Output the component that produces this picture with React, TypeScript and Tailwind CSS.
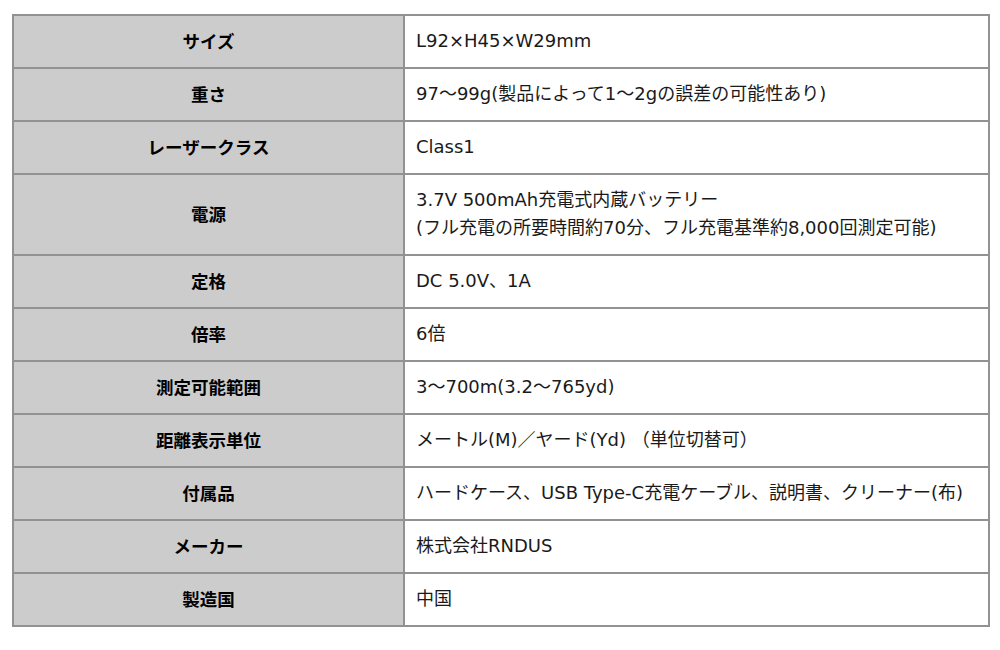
import React from "react";

const rows: { label: string; value: string[] }[] = [
  { label: "サイズ", value: ["L92×H45×W29mm"] },
  { label: "重さ", value: ["97～99g(製品によって1～2gの誤差の可能性あり)"] },
  { label: "レーザークラス", value: ["Class1"] },
  {
    label: "電源",
    value: [
      "3.7V 500mAh充電式内蔵バッテリー",
      "(フル充電の所要時間約70分、フル充電基準約8,000回測定可能)",
    ],
  },
  { label: "定格", value: ["DC 5.0V、1A"] },
  { label: "倍率", value: ["6倍"] },
  { label: "測定可能範囲", value: ["3～700m(3.2～765yd)"] },
  { label: "距離表示単位", value: ["メートル(M)／ヤード(Yd) （単位切替可）"] },
  { label: "付属品", value: ["ハードケース、USB Type-C充電ケーブル、説明書、クリーナー(布)"] },
  { label: "メーカー", value: ["株式会社RNDUS"] },
  { label: "製造国", value: ["中国"] },
];

export default function App() {
  return (
    <div className="w-[1000px] h-[650px] bg-white pt-[14px] pl-[12px] font-['DejaVu_Sans','Noto_Sans_CJK_JP',sans-serif]">
      <table className="w-[978px] border-separate border-spacing-0 border-t-2 border-l-2 border-[#929292] leading-[28px]">
        <tbody>
          {rows.map((r) => (
            <tr key={r.label}>
              <td className="w-[391px] bg-[#cccccc] border-r-2 border-b-2 border-[#929292] text-center align-middle font-bold text-black text-[17.5px] pt-[11px] pb-[12px] font-['Noto_Sans_CJK_JP',sans-serif]">
                {r.label}
              </td>
              <td className="bg-white border-r-2 border-b-2 border-[#929292] pl-[11px] pt-[11px] pb-[12px] text-[#1a1a1a] text-[18px] align-middle">
                {r.value.map((line) => (
                  <div key={line}>{line}</div>
                ))}
              </td>
            </tr>
          ))}
        </tbody>
      </table>
    </div>
  );
}
